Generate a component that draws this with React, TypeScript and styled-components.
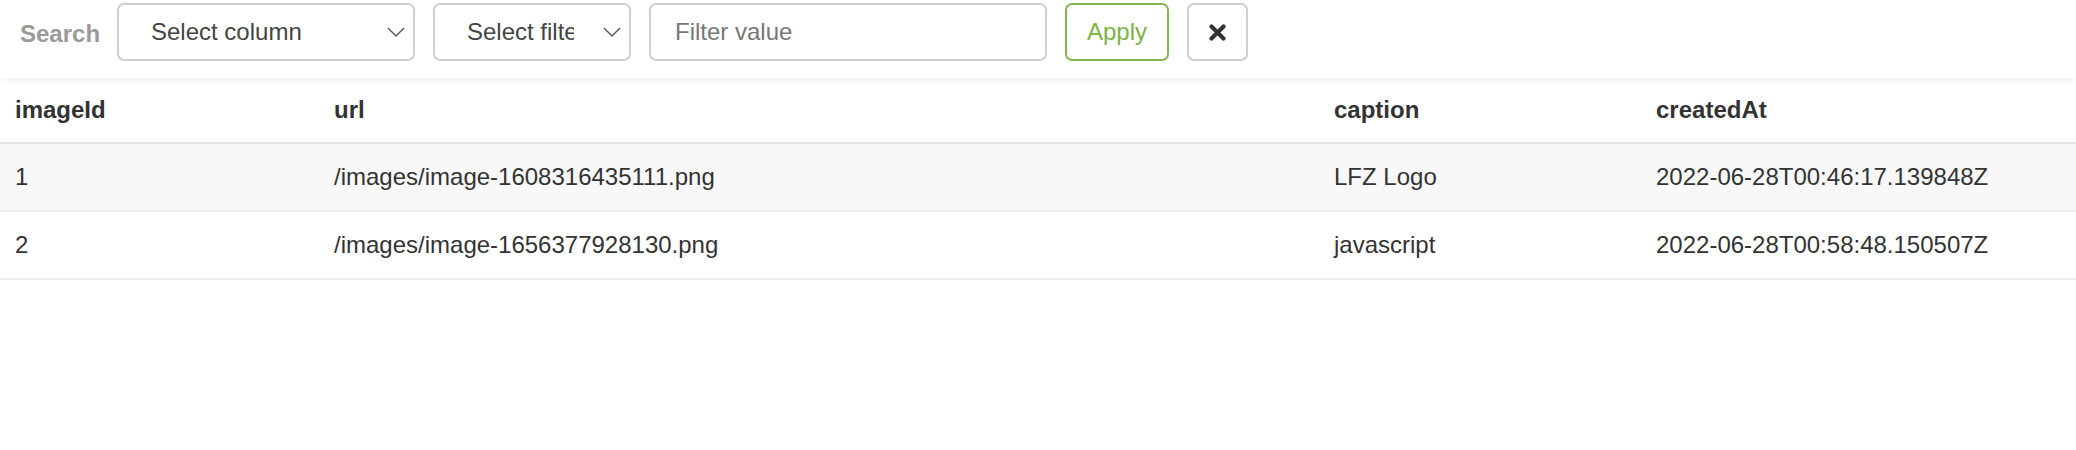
import React from "react";
import styled, { createGlobalStyle } from "styled-components";

const GlobalStyle = createGlobalStyle`
  html, body {
    margin: 0;
    padding: 0;
    background: #ffffff;
    font-family: "Liberation Sans", Arial, Helvetica, sans-serif;
  }
  * { box-sizing: border-box; }
`;

const Page = styled.div`
  width: 2076px;
  min-height: 450px;
  background: #fff;
`;

const Toolbar = styled.div`
  position: relative;
  z-index: 1;
  height: 78px;
  display: flex;
  align-items: flex-start;
  gap: 18px;
  padding: 3px 0 0 20px;
  background: #fff;
  box-shadow: 0 2px 7px rgba(0, 0, 0, 0.07);
`;

const Label = styled.span`
  width: 79px;
  height: 58px;
  display: flex;
  align-items: center;
  padding-top: 3px;
  font-size: 24px;
  font-weight: 700;
  color: #9a9a9a;
  white-space: nowrap;
`;

const SelectBox = styled.div<{ $w: number }>`
  width: ${(p) => p.$w}px;
  height: 58px;
  border: 2px solid #cfcfcf;
  border-radius: 7px;
  display: flex;
  align-items: center;
  padding: 0 8px 0 32px;
  background: #fff;
`;

const SelectText = styled.span<{ $max: number }>`
  flex: 0 0 auto;
  max-width: ${(p) => p.$max}px;
  overflow: hidden;
  white-space: nowrap;
  font-size: 24px;
  color: #444;
`;

const Chevron = styled.svg`
  margin-left: auto;
  flex: 0 0 auto;
`;

const Input = styled.div`
  width: 398px;
  height: 58px;
  border: 2px solid #cfcfcf;
  border-radius: 7px;
  display: flex;
  align-items: center;
  padding-left: 24px;
  font-size: 24px;
  color: #777;
`;

const Button = styled.div<{ $w: number; $green?: boolean }>`
  width: ${(p) => p.$w}px;
  height: 58px;
  border: 2px solid ${(p) => (p.$green ? "#82b651" : "#cfcfcf")};
  border-radius: 7px;
  display: flex;
  align-items: center;
  justify-content: center;
  font-size: 24px;
  color: ${(p) => (p.$green ? "#7cb342" : "#333")};
  background: #fff;
`;

const Grid = styled.div`
  display: grid;
  grid-template-columns: 319px 1000px 322px 1fr;
`;

const HeadRow = styled(Grid)`
  height: 66px;
  border-bottom: 2px solid #e6e6e6;
`;

const BodyRow = styled(Grid)<{ $striped?: boolean }>`
  height: 68px;
  border-bottom: 2px solid #ececec;
  background: ${(p) => (p.$striped ? "#f8f8f8" : "#fff")};
`;

const Cell = styled.div<{ $head?: boolean }>`
  display: flex;
  align-items: center;
  padding-left: 15px;
  font-size: 24px;
  font-weight: ${(p) => (p.$head ? 700 : 400)};
  color: #333;
  white-space: nowrap;
`;

const ChevronIcon = () => (
  <Chevron width="18" height="10" viewBox="0 0 18 10">
    <path d="M1 1 L9 9 L17 1" fill="none" stroke="#555" strokeWidth="1.4" />
  </Chevron>
);

const XIcon = () => (
  <svg width="17" height="17" viewBox="0 0 17 17">
    <path
      d="M2.5 2.5 L14.5 14.5 M14.5 2.5 L2.5 14.5"
      stroke="#333"
      strokeWidth="4.2"
      strokeLinecap="round"
    />
  </svg>
);

const rows = [
  {
    imageId: "1",
    url: "/images/image-1608316435111.png",
    caption: "LFZ Logo",
    createdAt: "2022-06-28T00:46:17.139848Z",
  },
  {
    imageId: "2",
    url: "/images/image-1656377928130.png",
    caption: "javascript",
    createdAt: "2022-06-28T00:58:48.150507Z",
  },
];

export default function App() {
  return (
    <Page>
      <GlobalStyle />
      <Toolbar>
        <Label>Search</Label>
        <SelectBox $w={298}>
          <SelectText $max={220}>Select column</SelectText>
          <ChevronIcon />
        </SelectBox>
        <SelectBox $w={198}>
          <SelectText $max={107}>Select filter</SelectText>
          <ChevronIcon />
        </SelectBox>
        <Input>Filter value</Input>
        <Button $w={104} $green>
          Apply
        </Button>
        <Button $w={61}>
          <XIcon />
        </Button>
      </Toolbar>
      <HeadRow>
        <Cell $head>imageId</Cell>
        <Cell $head>url</Cell>
        <Cell $head>caption</Cell>
        <Cell $head>createdAt</Cell>
      </HeadRow>
      {rows.map((r, i) => (
        <BodyRow key={r.imageId} $striped={i % 2 === 0}>
          <Cell>{r.imageId}</Cell>
          <Cell>{r.url}</Cell>
          <Cell>{r.caption}</Cell>
          <Cell>{r.createdAt}</Cell>
        </BodyRow>
      ))}
    </Page>
  );
}
